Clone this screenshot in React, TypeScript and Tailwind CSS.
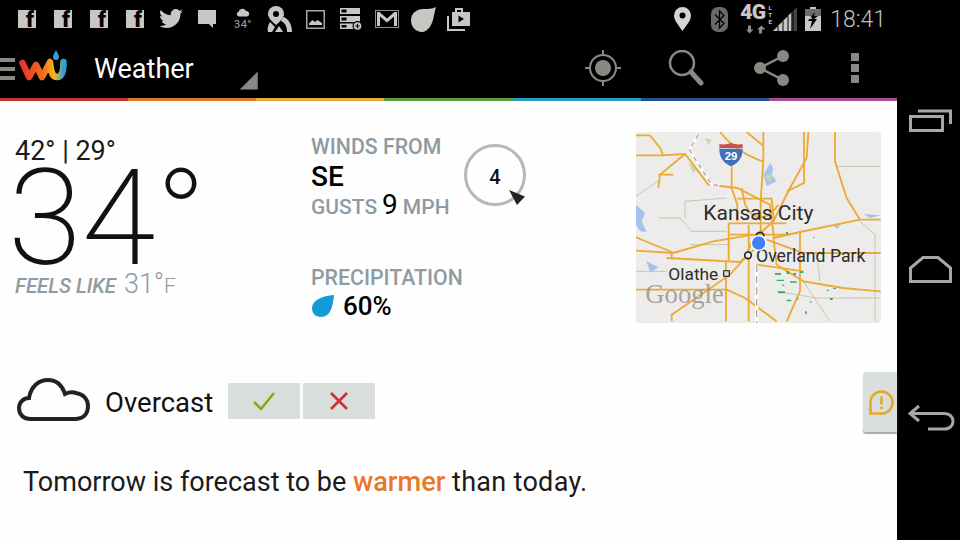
const stripe = [
  "bg-[#c2362f]",
  "bg-[#d9792f]",
  "bg-[#e5ab3a]",
  "bg-[#5a9e48]",
  "bg-[#2a9cc4]",
  "bg-[#25508e]",
  "bg-[#a34f90]",
];

const ICON = "#c9c7c4";

const FbIcon = () => (
  <div className="flex h-[18px] w-[18px] items-end justify-end bg-[#c9c7c4]">
    <span className="mr-[2px] text-[22px] leading-[16px] font-black text-black">f</span>
  </div>
);

const Weatherish = () => (
  <div className="flex flex-col items-center leading-none">
    <svg width="14" height="9" viewBox="0 0 14 9">
      <path d="M3 8.500a2.400 2.400 0 0 1-.5-4.700 4 4 0 0 1 7.500-.8 2.800 2.800 0 0 1 1 5.500z" fill={ICON} />
    </svg>
    <span className="mt-[2px] text-[11px] leading-[12px] tracking-[0.5px] text-[#a9a7a4]">34°</span>
  </div>
);

const statusIcons = [
  <FbIcon key="f1" />,
  <FbIcon key="f2" />,
  <FbIcon key="f3" />,
  <FbIcon key="f4" />,
  <svg key="tw" width="24" height="20" viewBox="0 0 24 20">
    <path
      d="M24 2.400c-.9.400-1.800.7-2.800.8 1-.6 1.800-1.600 2.200-2.700-1 .6-2 1-3.100 1.200A4.900 4.900 0 0 0 11.900 6.200C7.800 6 4.200 4 1.700.9c-1.300 2.200-.6 5.100 1.500 6.500-.8 0-1.600-.2-2.200-.6 0 2.300 1.600 4.400 3.900 4.900-.7.200-1.500.2-2.200.1.600 2 2.400 3.400 4.600 3.400A9.900 9.900 0 0 1 0 16.700 13.900 13.900 0 0 0 7.500 19c9.100 0 14.300-7.700 14-14.600 1-.7 1.800-1.200 2.500-2z"
      fill={ICON}
    />
  </svg>,
  <svg key="chat" width="18" height="18" viewBox="0 0 18 18">
    <path d="M0 0h18v14h-3v4l-4-4H0z" fill={ICON} />
  </svg>,
  <Weatherish key="wx" />,
  <svg key="maps" width="25" height="26" viewBox="0 0 25 26">
    <path d="M9 0a8 8 0 0 1 8 8c0 3-3 7-8 11C4 15 1 11 1 8a8 8 0 0 1 8-8z" fill={ICON} />
    <circle cx="9" cy="8" r="3" fill="#000" />
    <path d="M16 11c5 1 9 7 9 15h-5c0-6-2-9-6-11z" fill={ICON} />
    <path d="M3 16l5 5-3 5H1c-1-3 0-7 2-10zM12 20l4 6H8z" fill={ICON} />
  </svg>,
  <svg key="pic" width="19" height="19" viewBox="0 0 19 19">
    <rect x="0.75" y="0.75" width="17.5" height="17.5" fill="none" stroke="#a9a7a4" strokeWidth="1.500" />
    <path d="M3 13.500l3.500-3.500 2.500 2 2.500-2 4.500 3v2H3z" fill={ICON} />
  </svg>,
  <svg key="store" width="23" height="23" viewBox="0 0 23 23">
    <path d="M0 0h20v6H0zM0 8h20v6H0zM0 15.500h15v5.500H0z" fill={ICON} />
    <path d="M1.500 1.500h5v3h-5zM1.500 9.500h5v3h-5zM1.500 17h5v2.500h-5z" fill="#000" />
    <circle cx="17.500" cy="18" r="5" fill="#000" />
    <circle cx="17.500" cy="18" r="3.800" fill={ICON} />
    <path d="M15.300 18h4.400M17.500 15.800v4.400" stroke="#000" strokeWidth="1.200" />
  </svg>,
  <svg key="gmail" width="24" height="18" viewBox="0 0 24 18">
    <rect x="0.500" y="0.500" width="23" height="17" fill="none" stroke="#8f8d8a" strokeWidth="1" />
    <path d="M2 16V2h2.500L12 8.500 19.500 2H22v14h-3V6.500L12 12.500 5 6.500V16z" fill={ICON} />
  </svg>,
  <svg key="leaf" width="25" height="25" viewBox="0 0 25 25">
    <path d="M25 0c-1 3-1 5-2 8-1 9-6 17-12 17C5 25 0 20 0 13.500 0 6 6 2 12 2c5 0 9 0 13-2z" fill={ICON} />
  </svg>,
  <svg key="brief" width="24" height="24" viewBox="0 0 24 24">
    <path d="M8 5V1h8v4h7v14H5V5zM10 3v2h4V3z" fill={ICON} />
    <path d="M11.500 8.500v7l5.500-3.500z" fill="#000" />
    <path d="M1 9v14h17" fill="none" stroke={ICON} strokeWidth="2" />
  </svg>,
];

const orange = "#ecaa35";
const roads = [
  "M18 32H60L92 72L100 95M18 92H92L165 88L235 180L322 190L420 240L432 340",
  "M165 88L90 150L85 190M85 150H130",
  "M305 125V190L322 240V290",
  "M535 22L530 100L480 190L430 290L385 330",
  "M615 22V110L650 220L690 285H752",
  "M690 285L510 322L430 340",
  "M18 378L130 385L250 350L370 330",
  "M18 338L125 382V400",
  "M410 345L520 385H752",
  "M110 400L330 412L372 375",
  "M125 590V570L300 450L345 400L372 335",
  "M18 495H290L345 520L440 590",
  "M400 22V110L392 230V320M350 22L398 62",
  "M322 222H425L432 290M296 296H470M296 296V412",
  "M356 300V590M430 340L440 420L520 470L640 490L690 495L752 500",
  "M510 320V500L470 590M288 412V590",
  "M380 420L520 440M470 200L522 175V22",
  "M270 22C300 60 340 90 398 110M335 190L345 240",
  "M345 240C370 290 410 290 445 240M300 330H480",
];
const grey = [
  "M18 215L90 165M85 280H150L185 320H290",
  "M165 230L290 220M165 230V280",
  "M620 125H752M690 290L735 330V590",
  "M520 470L600 590M180 360H300M440 500L560 520H752",
  "M18 440H110M560 385L570 470",
];

const MapThumb = () => (
  <svg width="245" height="191" viewBox="18 22 735 573" className="rounded-[3px] bg-[#edecea]">
    <path d="M18 240L45 265L35 290L50 322L30 320L18 300z" fill="#a6c3ef" />
    <path d="M420 115L430 130L425 150L440 170L410 185L400 150z" fill="#a6c3ef" />
    <path d="M48 408L85 428L62 445zM700 268L752 272L720 280zM610 305L632 300L622 312z" fill="#a6c3ef" />
    <path d="M400 150L425 150L420 172zM175 115L200 130L190 145zM225 40L245 45L235 60zM518 165L528 165L522 180z" fill="#c7d8a6" />
    {grey.map((d) => (
      <path key={d} d={d} fill="none" stroke="#c8c4b8" strokeWidth="3" />
    ))}
    {roads.map((d) => (
      <path key={d} d={d} fill="none" stroke={orange} strokeWidth="5.500" />
    ))}
    <path d="M205 30L178 75L245 180L268 182" fill="none" stroke="#fff" strokeWidth="8" />
    <path d="M205 30L178 75L245 180L268 182" fill="none" stroke="#a9a69e" strokeWidth="4" strokeDasharray="14 12" />
    <path d="M380 420V595" stroke="#fff" strokeWidth="10" />
    <path d="M380 420V595" stroke="#a9a69e" strokeWidth="4" strokeDasharray="22 12" />
    {/* radar specks */}
    <path
      d="M435 445h18v5h-18zM470 440h8v8h-8zM490 445h8v6h-8zM510 440h10v5h-10zM440 465h22v4h-22zM480 470h20v4h-20zM445 500h20v6h-20zM470 525h14v5h-14zM590 495h6v4h-6zM610 490h8v3h-8zM600 520h8v6h-8zM525 560h5v8h-5zM455 480h8v3h-8zM500 520h5v4h-5zM540 530h4v4h-4zM468 322h6v6h-6zM550 337h4v3h-4z"
      fill="#35ad6a"
    />
    {/* interstate shield */}
    <path d="M268 58Q285 62 303 55Q320 62 338 58L338 70H268z" fill="#c9524a" />
    <path d="M268 72H338C338 100 325 115 303 125C281 115 268 100 268 72z" fill="#3f71b8" />
    <text x="303" y="105" textAnchor="middle" fontSize="34" fontWeight="700" fill="#fff" fontFamily="Liberation Sans, sans-serif">
      29
    </text>
    <text x="46" y="535" fontSize="80" fill="#8c8a86" fillOpacity="0.75" fontFamily="Liberation Serif, serif">
      Google
    </text>
    <text x="385" y="287" textAnchor="middle" fontSize="63" fill="#2c2c2c" fontFamily="Roboto, sans-serif">
      Kansas City
    </text>
    <text x="378" y="413" fontSize="53" fill="#2c2c2c" fontFamily="Roboto, sans-serif">
      Overland Park
    </text>
    <text x="115" y="467" fontSize="52" fill="#2c2c2c" fontFamily="Roboto, sans-serif">
      Olathe
    </text>
    <rect x="281" y="438" width="17" height="17" rx="2" fill="#ddd" stroke="#333" strokeWidth="4" />
    <circle cx="354" cy="392" r="10" fill="#eee" stroke="#222" strokeWidth="5" />
    <path d="M378 335a12 12 0 0 1 24 0" fill="none" stroke="#222" strokeWidth="5" />
    <circle cx="386" cy="355" r="22" fill="#3f81f5" stroke="#fff" strokeWidth="4" />
  </svg>
);

export default function App() {
  return (
    <div className="flex h-[540px] w-[960px] overflow-hidden bg-black font-[family-name:Roboto,sans-serif]">
      <div className="flex w-[897px] flex-col">
        {/* status bar */}
        <div className="flex h-[38px] items-center pl-[9px] pr-[11px]">
          {statusIcons.map((icon) => (
            <div key={icon.key} className="flex h-9 w-9 items-center justify-center">
              {icon}
            </div>
          ))}
          <div className="ml-auto flex items-center">
            <svg width="17" height="24" viewBox="0 0 17 24">
              <path d="M8.500 0a8.500 8.500 0 0 1 8.500 8.500C17 14 11 20 8.500 24 6 20 0 14 0 8.500A8.500 8.500 0 0 1 8.500 0z" fill="#d6d4d1" />
              <circle cx="8.500" cy="8.500" r="3" fill="#000" />
            </svg>
            <svg width="17" height="25" viewBox="0 0 17 25" className="ml-[20px]">
              <rect width="17" height="25" rx="7" fill="#6b6967" />
              <path d="M4 7.500l9 9-4.500 4.500V4L13 8.500l-9 9" fill="none" stroke="#000" strokeWidth="1.300" />
            </svg>
            <div className="ml-[12px] flex w-[33px] flex-col">
              <div className="flex items-start">
                <span className="text-[21px] leading-[16px] font-black tracking-[-0.5px] text-[#c9c7c4]">4G</span>
                <span className="ml-[1px] text-[6px] leading-[6px] font-bold text-[#c9c7c4] [text-orientation:upright] [writing-mode:vertical-rl]">
                  LTE
                </span>
              </div>
              <svg width="20" height="9" viewBox="0 0 20 8" className="ml-[6px]">
                <path d="M2 0h3v4h2.500L3.500 8 0 4h2zM13 8h3V4h3.500l-4-4L11 4h2z" fill="#8f8d8a" />
              </svg>
            </div>
            <svg width="24" height="24" viewBox="0 0 24 24">
              <path d="M0 24L24 0v24z" fill="#444" />
              <path d="M0 24L18 6v18z" fill="#c9c7c4" />
              <path d="M5 24V19M10 24V14M15 24V9M20 24V4" stroke="#000" strokeWidth="1" />
            </svg>
            <svg width="16" height="24" viewBox="0 0 16 24" className="ml-2">
              <path d="M5 0h6v2h5v22H0V2h5z" fill="#c9c7c4" />
              <path d="M0 2h16v7H0z" fill="#6f6d6a" />
              <path d="M10 5L5.500 9H9zM3 14l3-5h7l-4 3h3l-7 10 2-8z" fill="#000" />
              <path d="M10 5L4 12h3L6 9z" fill="#d6d4d1" />
            </svg>
            <span className="ml-[9px] text-[23px] leading-none font-light text-[#c4c2bf]">18:41</span>
          </div>
        </div>

        {/* action bar */}
        <div className="flex h-[60px] items-center">
          <div className="flex w-[15px] flex-col gap-[5px] self-start pt-5">
            <div className="h-1 bg-[#8a8883]" />
            <div className="h-1 bg-[#8a8883]" />
            <div className="h-1 bg-[#8a8883]" />
          </div>
          <svg width="48" height="32" viewBox="0 0 48 32" className="ml-1 -mt-[4px]">
            <defs>
              <linearGradient id="wu" x1="0" y1="0" x2="1" y2="0">
                <stop offset="0" stopColor="#e8362c" />
                <stop offset="0.5" stopColor="#f0701d" />
                <stop offset="0.78" stopColor="#f5b81d" />
                <stop offset="1" stopColor="#2a9fd8" />
              </linearGradient>
            </defs>
            <path d="M3.500 13L10 27L17 15L23 27L31 12C32 24 34 27 38 27C43 27 44.500 22 44.500 12" fill="none" stroke="url(#wu)" strokeWidth="6.500" strokeLinecap="round" strokeLinejoin="round" />
            <path d="M37 0C39 4 40 5 40 7A3 3 0 0 1 34 7C34 5 35 4 37 0z" fill="#2a9fd8" />
          </svg>
          <span className="ml-[27px] mt-[2px] text-[27px] leading-none text-white">Weather</span>
          <div className="ml-[46px] mt-[25px] h-[18px] w-[18px] bg-[#8a8883] [clip-path:polygon(100%_0,100%_100%,0_100%)]" />
          <div className="ml-[327px] flex items-center">
            <svg width="36" height="36" viewBox="0 0 36 36">
              <circle cx="18" cy="18" r="13" fill="none" stroke="#8a8883" strokeWidth="2" />
              <circle cx="18" cy="18" r="8" fill="#8a8883" />
              <path d="M18 0v6M18 30v6M0 18h6M30 18h6" stroke="#8a8883" strokeWidth="2" />
            </svg>
            <svg width="36" height="36" viewBox="0 0 36 36" className="ml-[47px]">
              <circle cx="14" cy="13" r="12" fill="none" stroke="#8a8883" strokeWidth="2.500" />
              <path d="M23 22l10 11" stroke="#8a8883" strokeWidth="5" strokeLinecap="round" />
            </svg>
            <svg width="36" height="36" viewBox="0 0 36 36" className="ml-[50px]">
              <path d="M29 6L6 18l23 12" fill="none" stroke="#8a8883" strokeWidth="2.500" />
              <circle cx="29" cy="6" r="6" fill="#8a8883" />
              <circle cx="6" cy="18" r="6" fill="#8a8883" />
              <circle cx="29" cy="30" r="6" fill="#8a8883" />
            </svg>
            <div className="ml-[61px] flex w-2 flex-col gap-[3px]">
              <div className="h-2 bg-[#8a8883]" />
              <div className="h-2 bg-[#8a8883]" />
              <div className="h-2 bg-[#8a8883]" />
            </div>
          </div>
        </div>

        <div className="flex h-[3px]">
          {stripe.map((c) => (
            <div key={c} className={`flex-1 ${c}`} />
          ))}
        </div>

        {/* content */}
        <div className="flex-1 bg-[#fefefe]">
          <div className="flex pt-[31px] pl-[15px]">
            <div className="w-[296px] pt-1">
              <div className="text-[27px] leading-[30px] text-[#1a1a1a]">42° | 29°</div>
              <div className="-ml-[7px] h-[105px] text-[134px] leading-[105px] font-extralight text-[#111]">34°</div>
              <div className="flex items-baseline leading-[26px] text-[#8f9aa2]">
                <span className="text-[20.4px] font-medium italic">FEELS LIKE</span>
                <span className="ml-[8px] text-[27px] font-light">31°</span>
                <span className="text-[21px] font-light">F</span>
              </div>
            </div>
            <div className="w-[325px]">
              <div className="flex">
                <div className="w-[153px]">
                  <div className="text-[21.3px] leading-[30px] font-medium text-[#8f9ba3]">WINDS FROM</div>
                  <div className="text-[28px] leading-[30px] font-medium text-black">SE</div>
                  <div className="flex items-baseline leading-[26px] text-[#8f9ba3]">
                    <span className="text-[21px] font-medium">GUSTS</span>
                    <span className="mx-[5px] text-[28px] text-black">9</span>
                    <span className="text-[21px] font-medium">MPH</span>
                  </div>
                </div>
                <div className="relative mt-[12px] flex h-[62px] w-[62px] items-center justify-center rounded-full border-[3px] border-[#b9b7b2]">
                  <span className="mt-[4px] text-[20px] leading-none font-medium text-[#111]">4</span>
                  <svg width="16" height="15" viewBox="0 0 16 15" className="absolute top-[43px] left-[42px]">
                    <path d="M0 0L16 6.500L8 15z" fill="#222" />
                  </svg>
                </div>
              </div>
              <div className="mt-[44px] text-[21.3px] leading-[28px] font-medium text-[#8f9ba3]">PRECIPITATION</div>
              <div className="-mt-[2px] flex items-center">
                <svg width="22" height="22" viewBox="0 0 22 22" className="ml-[1px]">
                  <path d="M22 0C21 10 19 22 9 22C3 22 0 18 0 13C0 5 10 1 22 0z" fill="#129bd6" />
                </svg>
                <span className="ml-[9px] text-[26px] leading-[32px] font-medium text-black">60%</span>
              </div>
            </div>
            <MapThumb />
          </div>

          <div className="mt-[49px] flex items-center pl-4">
            <svg width="75" height="45" viewBox="0 0 75 45" className="mb-[6px]">
              <path
                d="M15 42C7 42 3 37 3 31C3 25 8 21 13 21C15 9 23 3 32 3C41 3 46 8 49 17C53 15 57 15 60 16C67 17 72 22 72 29C72 37 67 42 60 42Z"
                fill="none"
                stroke="#222"
                strokeWidth="4"
              />
            </svg>
            <span className="ml-[14px] mt-[2px] text-[27.5px] leading-none text-[#111]">Overcast</span>
            <div className="mb-[2px] ml-[15px] flex gap-[3px]">
              <div className="flex h-[36px] w-[72px] items-center justify-center rounded-[1px] bg-[#d9dedd]">
                <svg width="24" height="20" viewBox="0 0 24 20">
                  <path d="M2 11l7 7L22 2" fill="none" stroke="#7fae12" strokeWidth="2.500" />
                </svg>
              </div>
              <div className="flex h-[36px] w-[72px] items-center justify-center rounded-[1px] bg-[#d9dedd]">
                <svg width="20" height="20" viewBox="0 0 20 20">
                  <path d="M2 2l16 16M18 2L2 18" fill="none" stroke="#cf2b33" strokeWidth="2.500" />
                </svg>
              </div>
            </div>
            <div className="ml-auto flex h-[60px] w-[34px] items-center justify-end rounded-l-[3px] bg-[#dadfde] shadow-[0_2px_1px_#aaa]">
              <svg width="25" height="25" viewBox="0 0 25 25" className="mr-[3px]">
                <path d="M12.500 1.500a11 11 0 1 1 0 22H1.500v-11a11 11 0 0 1 11-11z" fill="none" stroke="#e6a822" strokeWidth="2.500" />
                <path d="M12.500 6.500v8M12.500 16.500v2.500" stroke="#e6a822" strokeWidth="2.500" />
              </svg>
            </div>
          </div>

          <p className="mt-[30px] pl-[23px] text-[27px] leading-[40px] text-[#1a1a1a]">
            Tomorrow is forecast to be <span className="text-[27.2px] font-medium text-[#e8792b]">warmer</span>{" "}
            <span className="tracking-[0.3px]">than today.</span>
          </p>
        </div>
      </div>

      {/* nav buttons */}
      <div className="flex w-[63px] flex-col items-center pt-[108px] pl-[3px]">
        <svg width="43" height="24" viewBox="0 0 43 24">
          <path d="M1.500 8.500H33.500V22.500H1.500zM9 3H41.500V16" fill="none" stroke="#a9a7a3" strokeWidth="3" />
        </svg>
        <svg width="43" height="27" viewBox="0 0 43 27" className="mt-[124px]">
          <path d="M1.500 25.500V12L14 1.500H29L41.500 12V25.500z" fill="none" stroke="#a9a7a3" strokeWidth="3" />
        </svg>
        <svg width="47" height="27" viewBox="0 0 47 27" className="ml-[2px] mt-[121px]">
          <path d="M11 2L2 9.500L11 17M2 9.500H36C48 9.500 48 25 36 25H20" fill="none" stroke="#a9a7a3" strokeWidth="3" />
        </svg>
      </div>
    </div>
  );
}
